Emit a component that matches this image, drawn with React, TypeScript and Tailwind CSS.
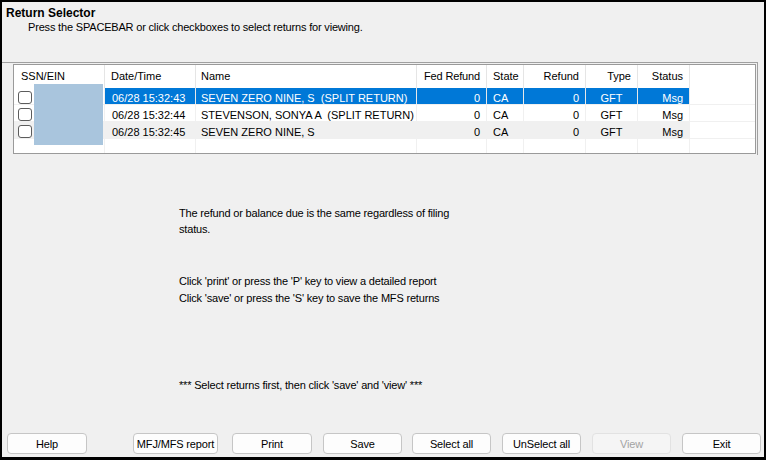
import React from "react";

type Row = {
  date: string;
  name: string;
  fed: string;
  state: string;
  refund: string;
  type: string;
  status: string;
  selected?: boolean;
  gray?: boolean;
};

const rows: Row[] = [
  { date: "06/28 15:32:43", name: "SEVEN ZERO NINE, S  (SPLIT RETURN)", fed: "0", state: "CA", refund: "0", type: "GFT", status: "Msg", selected: true },
  { date: "06/28 15:32:44", name: "STEVENSON, SONYA A  (SPLIT RETURN)", fed: "0", state: "CA", refund: "0", type: "GFT", status: "Msg" },
  { date: "06/28 15:32:45", name: "SEVEN ZERO NINE, S", fed: "0", state: "CA", refund: "0", type: "GFT", status: "Msg", gray: true },
];

function Btn({ label, w, ml, disabled }: { label: string; w: string; ml: string; disabled?: boolean }) {
  return (
    <div
      className={`${w} ${ml} h-[21px] rounded-[4px] border flex items-center justify-center text-[11px] leading-[14px] tracking-[-0.15px] ${
        disabled ? "border-[#e2e2e2] bg-[#f5f5f5] text-[#a3a3a3]" : "border-[#c6c6c6] bg-[#fdfdfd] text-black"
      }`}
    >
      {label}
    </div>
  );
}

export default function App() {
  const font = { fontFamily: '"Liberation Sans", Arial, sans-serif' };
  return (
    <div
      className="w-[766px] h-[460px] bg-[#f0f0f0] border-l-2 border-t-2 border-r-2 border-b-[3px] border-black flex flex-col text-black overflow-hidden"
      style={font}
    >
      {/* header */}
      <div className="h-[60px] pt-[5px] pl-[4px]">
        <div className="text-[12px] font-bold leading-[13px]">Return Selector</div>
        <div className="text-[11px] leading-[14px] pl-[22px] tracking-[-0.18px]">
          Press the SPACEBAR or click checkboxes to select returns for viewing.
        </div>
      </div>

      {/* list frame */}
      <div className="w-[756px] border-t border-r border-[#a0a0a0] pb-[1px]">
        <div className="relative ml-[11px] mt-[1px] w-[743px] h-[90px] border border-[#9a9a9a] bg-white overflow-hidden text-[11px]">
          {/* header row */}
          <div className="flex h-[23px] leading-[23px]">
            <div className="w-[91px] shrink-0 border-r border-[#e5e5e5] pl-[7px]">SSN/EIN</div>
            <div className="w-[91px] shrink-0 border-r border-[#e5e5e5] pl-[6px]">Date/Time</div>
            <div className="w-[221px] shrink-0 border-r border-[#e5e5e5] pl-[5px]">Name</div>
            <div className="w-[70px] shrink-0 border-r border-[#e5e5e5] pr-[6px] text-right tracking-[-0.15px]">Fed Refund</div>
            <div className="w-[37px] shrink-0 border-r border-[#e5e5e5] pl-[6px]">State</div>
            <div className="w-[62px] shrink-0 border-r border-[#e5e5e5] pr-[6px] text-right">Refund</div>
            <div className="w-[52px] shrink-0 border-r border-[#e5e5e5] pr-[6px] text-right">Type</div>
            <div className="w-[52px] shrink-0 border-r border-[#e5e5e5] pr-[6px] text-right">Status</div>
            <div className="flex-1" />
          </div>

          {rows.map((r, i) => {
            const cell = r.selected
              ? "bg-[#0078d7] text-white border-[#e8e8e8]"
              : r.gray
              ? "bg-[#f0f0f0] border-[#f0f0f0]"
              : "border-[#f0f0f0]";
            return (
              <div key={i} className="flex h-[17px] border-b border-[#f0f0f0] whitespace-pre">
                <div className={`w-[91px] shrink-0 border-r border-[#f0f0f0] pl-[4px] pt-[3px] ${r.gray ? "bg-[#f0f0f0]" : ""}`}>
                  <div className="w-[14px] h-[13px] rounded-[3px] border border-[#5c5c5c] bg-white" />
                </div>
                <div className={`w-[91px] shrink-0 border-r ${cell} pl-[7px] pt-[2px] leading-[16px]`}>{r.date}</div>
                <div className={`w-[221px] shrink-0 border-r ${cell} pl-[5px] pt-[2px] leading-[16px] overflow-hidden`}>{r.name}</div>
                <div className={`w-[70px] shrink-0 border-r ${cell} pr-[6px] pt-[2px] leading-[16px] text-right`}>{r.fed}</div>
                <div className={`w-[37px] shrink-0 border-r ${cell} pl-[6px] pt-[2px] leading-[16px]`}>{r.state}</div>
                <div className={`w-[62px] shrink-0 border-r ${cell} pr-[6px] pt-[2px] leading-[16px] text-right`}>{r.refund}</div>
                <div className={`w-[52px] shrink-0 border-r ${cell} pt-[2px] leading-[16px] text-center`}>{r.type}</div>
                <div className={`w-[52px] shrink-0 border-r ${cell} pr-[6px] pt-[2px] leading-[16px] text-right`}>{r.status}</div>
                <div className="flex-1" />
              </div>
            );
          })}
          {/* empty row */}
          <div className="flex h-[17px] border-b border-[#f0f0f0]">
            <div className="w-[91px] shrink-0 border-r border-[#f0f0f0]" />
            <div className="w-[91px] shrink-0 border-r border-[#f0f0f0]" />
            <div className="w-[221px] shrink-0 border-r border-[#f0f0f0]" />
            <div className="w-[70px] shrink-0 border-r border-[#f0f0f0]" />
            <div className="w-[37px] shrink-0 border-r border-[#f0f0f0]" />
            <div className="w-[62px] shrink-0 border-r border-[#f0f0f0]" />
            <div className="w-[52px] shrink-0 border-r border-[#f0f0f0]" />
            <div className="w-[52px] shrink-0 border-r border-[#f0f0f0]" />
            <div className="flex-1" />
          </div>

          {/* redaction overlay */}
          <div className="absolute left-[20px] top-[19px] w-[69px] h-[61px] bg-[#a9c5dd]" />
        </div>
      </div>

      {/* message area */}
      <div className="ml-[177px] text-[11px] tracking-[-0.18px]">
        <div className="mt-[50px] w-[280px] leading-[16px]">
          The refund or balance due is the same regardless of filing status.
        </div>
        <div className="mt-[36px] leading-[17px]">
          <div>Click 'print' or press the 'P' key to view a detailed report</div>
          <div>Click 'save' or press the 'S' key to save the MFS returns</div>
        </div>
        <div className="mt-[70px] leading-[17px]">*** Select returns first, then click 'save' and 'view' ***</div>
      </div>

      {/* buttons */}
      <div className="mt-auto flex pb-[3px]">
        <Btn label="Help" w="w-[80px]" ml="ml-[5px]" />
        <Btn label="MFJ/MFS report" w="w-[85px]" ml="ml-[46px]" />
        <Btn label="Print" w="w-[80px]" ml="ml-[14px]" />
        <Btn label="Save" w="w-[79px]" ml="ml-[11px]" />
        <Btn label="Select all" w="w-[79px]" ml="ml-[10px]" />
        <Btn label="UnSelect all" w="w-[79px]" ml="ml-[11px]" />
        <Btn label="View" w="w-[79px]" ml="ml-[11px]" disabled />
        <Btn label="Exit" w="w-[79px]" ml="ml-[11px]" />
      </div>
    </div>
  );
}
